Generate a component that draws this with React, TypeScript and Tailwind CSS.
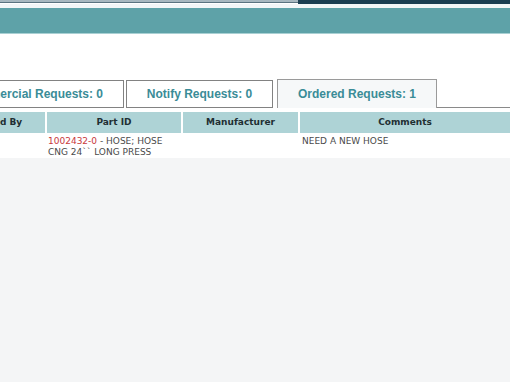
import React from "react";

const verdana = { fontFamily: '"DejaVu Sans", Verdana, sans-serif' };
const arial = { fontFamily: '"Liberation Sans", Arial, sans-serif' };

export default function App() {
  return (
    <div className="w-[510px] h-[382px] overflow-hidden flex flex-col bg-white">
      {/* top bars */}
      <div className="flex h-[4px] shrink-0">
        <div className="w-[298px] shrink-0 h-[3px] bg-[#a7b8c0] border-b border-[#5a7380]" />
        <div className="flex-1 bg-[#1b3e51]" />
      </div>
      <div className="h-[4px] shrink-0 bg-[#f2f6f7]" />
      <div className="h-[25px] shrink-0 bg-[#5ea2a8]" />
      <div className="h-[1px] shrink-0 bg-[#a9d0d3]" />

      <div className="h-[45px] shrink-0" />

      {/* tabs */}
      <div className="flex items-end ml-[-58px] shrink-0" style={arial}>
        <div className="shrink-0 w-[182px] h-[28px] border border-[#828282] bg-white flex items-center justify-center text-[12px] font-bold text-[#3a8c97] whitespace-nowrap">
          Commercial Requests: 0
        </div>
        <div className="shrink-0 ml-[2px] w-[147px] h-[28px] border border-[#828282] bg-white flex items-center justify-center text-[12px] font-bold text-[#3a8c97] whitespace-nowrap">
          Notify Requests: 0
        </div>
        <div className="shrink-0 ml-[4px] w-[160px] h-[29px] border border-b-0 border-[#9a9a9a] bg-[#f6f8f9] flex items-center justify-center text-[12px] font-bold text-[#3a8c97] whitespace-nowrap">
          Ordered Requests: 1
        </div>
        <div className="flex-1 h-[1px] bg-[#8a8a8a]" />
      </div>

      <div className="h-[4px] shrink-0" />

      {/* table */}
      <div className="ml-[-58px] shrink-0" style={verdana}>
        <div className="flex h-[21px] bg-[#aed3d6] text-[9px] font-bold text-[#1f2f33]">
          <div className="shrink-0 w-[103px] flex items-center justify-center whitespace-nowrap">Ordered By</div>
          <div className="shrink-0 w-[2px] bg-white" />
          <div className="shrink-0 w-[134px] flex items-center justify-center whitespace-nowrap">Part ID</div>
          <div className="shrink-0 w-[2px] bg-white" />
          <div className="shrink-0 w-[115px] flex items-center justify-center whitespace-nowrap">Manufacturer</div>
          <div className="shrink-0 w-[2px] bg-white" />
          <div className="flex-1 flex items-center justify-center whitespace-nowrap">Comments</div>
        </div>
        <div className="flex h-[25px] bg-white text-[9px] leading-[11px] text-[#4a4a4a]">
          <div className="shrink-0 w-[103px]" />
          <div className="shrink-0 w-[2px]" />
          <div className="shrink-0 w-[134px] pl-[1px] pt-[3px]">
            <div className="whitespace-nowrap">
              <span className="text-[#c8383b]">1002432-0</span> - HOSE; HOSE
            </div>
            <div className="whitespace-nowrap">CNG 24`` LONG PRESS</div>
          </div>
          <div className="shrink-0 w-[2px]" />
          <div className="shrink-0 w-[115px]" />
          <div className="shrink-0 w-[2px]" />
          <div className="flex-1 pl-[2px] pt-[3px] whitespace-nowrap">NEED A NEW HOSE</div>
        </div>
      </div>

      <div className="flex-1 bg-[#f4f5f6]" />
    </div>
  );
}
